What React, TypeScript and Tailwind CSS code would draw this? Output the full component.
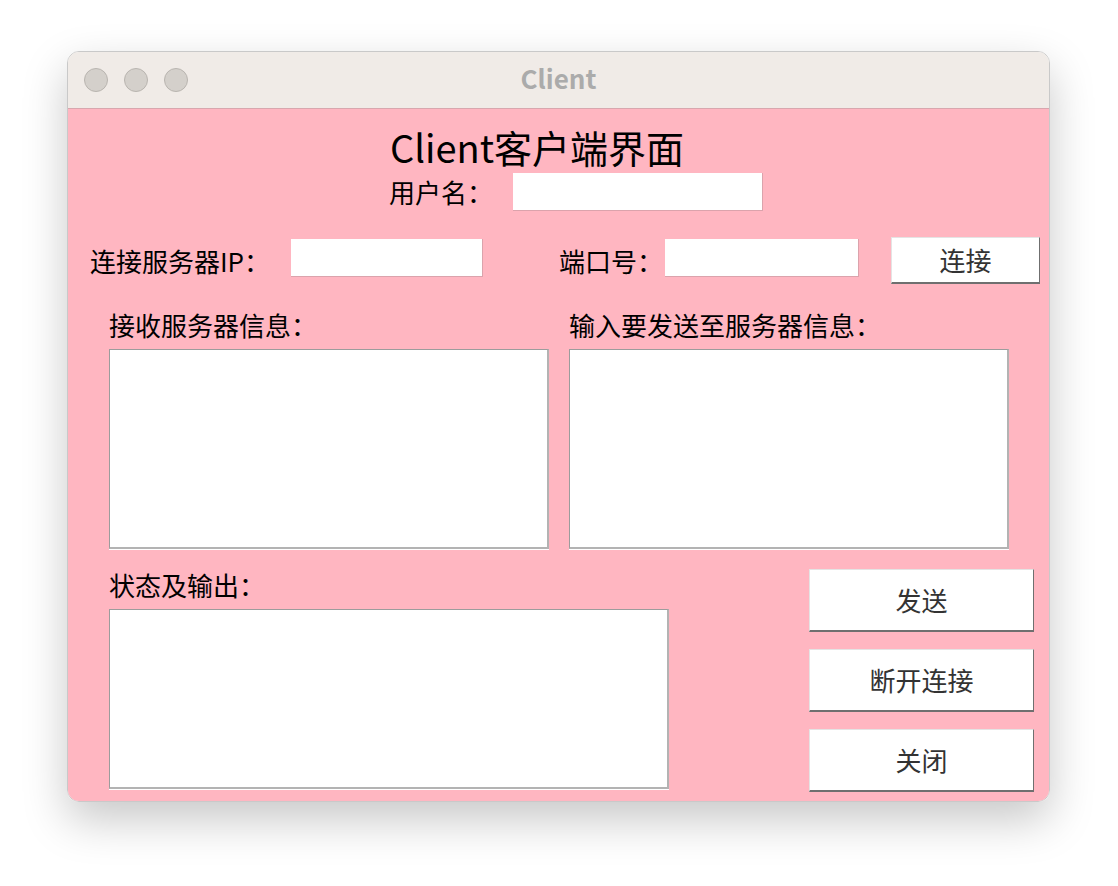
import React from 'react';

const font = "font-['Noto_Sans_CJK_SC','Noto_Sans',sans-serif]";

function Entry({ width, className = '' }: { width: string; className?: string }) {
  return <div className={`${width} ${className} h-[38px] bg-white border-b border-r border-[#dba3ac]`} />;
}

function TextBox({ width, height }: { width: string; height: string }) {
  return (
    <div
      className={`${width} ${height} bg-white border-t border-l border-[#9c9c9c] border-r-2 border-b-2 border-r-[#b3b3b3] border-b-[#b3b3b3] shadow-[0_1px_0_#ffffff]`}
    />
  );
}

function Button({ label, className }: { label: string; className: string }) {
  return (
    <button
      className={`${className} flex items-center justify-center bg-white border-t border-l border-[#e4e4e4] border-r border-b-2 border-r-[#6f6f6f] border-b-[#6f6f6f] text-[26px] leading-none text-[#333333]`}
    >
      {label}
    </button>
  );
}

export default function App() {
  return (
    <div className={`min-h-screen bg-white pl-[67px] pt-[51px] ${font}`}>
      {/* Window */}
      <div className="w-[983px] h-[751px] rounded-[12px] overflow-hidden border border-[#c9c9c9] shadow-[0_18px_45px_rgba(0,0,0,0.22)] flex flex-col">
        {/* Title bar */}
        <div className="relative h-[57px] shrink-0 bg-[#f0ebe7] border-b border-[#d8a7ae] flex items-center">
          <div className="flex gap-[16px] pl-[16px]">
            <span className="w-[24px] h-[24px] rounded-full bg-[#d4d0cb] border border-[#b9b5b0]" />
            <span className="w-[24px] h-[24px] rounded-full bg-[#d4d0cb] border border-[#b9b5b0]" />
            <span className="w-[24px] h-[24px] rounded-full bg-[#d4d0cb] border border-[#b9b5b0]" />
          </div>
          <div className="absolute inset-0 pb-[6px] flex items-center justify-center text-[26px] font-bold text-[#ababab] pointer-events-none">
            Client
          </div>
        </div>

        {/* Content */}
        <div className="flex-1 bg-[#ffb6c1] text-black">
          {/* Heading */}
          <div className="h-[64px] pl-[322px] pt-[19px]">
            <div className="text-[38px] leading-[38px]">Client客户端界面</div>
          </div>

          {/* Username */}
          <div className="h-[38px] flex items-center">
            <span className="w-[445px] pl-[321px] text-[26px] leading-none">用户名：</span>
            <Entry width="w-[250px]" />
          </div>

          {/* Server row */}
          <div className="mt-[26px] h-[47px] flex items-center">
            <span className="w-[223px] pl-[22px] text-[26px] leading-none">连接服务器IP：</span>
            <Entry width="w-[192px]" className="self-start mt-[2px]" />
            <span className="w-[182px] pl-[76px] text-[26px] leading-none">端口号：</span>
            <Entry width="w-[194px]" className="self-start mt-[2px]" />
            <span className="w-[32px]" />
            <Button label="连接" className="w-[149px] h-[47px]" />
          </div>

          {/* Message boxes */}
          <div className="flex pl-[41px] gap-[20px]">
            <div className="flex flex-col">
              <div className="mt-[28px] mb-[11px] h-[26px] text-[26px] leading-[26px]">接收服务器信息：</div>
              <TextBox width="w-[440px]" height="h-[200px]" />
            </div>
            <div className="flex flex-col">
              <div className="mt-[28px] mb-[11px] h-[26px] text-[26px] leading-[26px]">输入要发送至服务器信息：</div>
              <TextBox width="w-[440px]" height="h-[200px]" />
            </div>
          </div>

          {/* Status + actions */}
          <div className="flex pl-[41px] gap-[140px]">
            <div className="flex flex-col">
              <div className="mt-[23px] mb-[11px] h-[26px] text-[26px] leading-[26px]">状态及输出：</div>
              <TextBox width="w-[560px]" height="h-[180px]" />
            </div>
            <div className="mt-[20px] flex flex-col gap-[17px]">
              <Button label="发送" className="w-[225px] h-[63px]" />
              <Button label="断开连接" className="w-[225px] h-[63px]" />
              <Button label="关闭" className="w-[225px] h-[63px]" />
            </div>
          </div>
        </div>
      </div>
    </div>
  );
}
